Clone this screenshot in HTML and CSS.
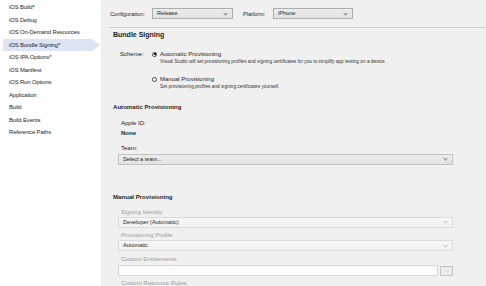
FILE: index.html
```html
<!DOCTYPE html>
<html lang="en">

<head>
  <meta charset="UTF-8">
  <meta name="viewport" content="width=device-width, initial-scale=1.0">
  <title>iOS Bundle Signing</title>
  <link rel="stylesheet" href="styles.css">
</head>

<body>
  <div class="window">
    <ul class="nav">
      <li class="nav-item">iOS Build*</li>
      <li class="nav-item">iOS Debug</li>
      <li class="nav-item">iOS On-Demand Resources</li>
      <li class="nav-item active">iOS Bundle Signing*</li>
      <li class="nav-item">iOS IPA Options*</li>
      <li class="nav-item">iOS Manifest</li>
      <li class="nav-item">iOS Run Options</li>
      <li class="nav-item">Application</li>
      <li class="nav-item">Build</li>
      <li class="nav-item">Build Events</li>
      <li class="nav-item">Reference Paths</li>
    </ul>

    <div class="main">
      <div class="toolbar">
        <span class="toolbar-label">Configuration:</span>
        <div class="select select-config">Release</div>
        <span class="toolbar-label platform-label">Platform:</span>
        <div class="select select-platform">iPhone</div>
      </div>

      <div class="content">
        <h2 class="page-title">Bundle Signing</h2>

        <div class="scheme">
          <span class="scheme-label">Scheme:</span>
          <div class="options">
            <div class="option">
              <span class="radio checked"></span>
              <div>
                <div class="option-title">Automatic Provisioning</div>
                <div class="option-desc">Visual Studio will set provisioning profiles and signing certificates for you to simplify app testing on a device.</div>
              </div>
            </div>
            <div class="option">
              <span class="radio"></span>
              <div>
                <div class="option-title">Manual Provisioning</div>
                <div class="option-desc">Set provisioning profiles and signing certificates yourself.</div>
              </div>
            </div>
          </div>
        </div>

        <h3 class="section-title auto-title">Automatic Provisioning</h3>
        <div class="fields auto-fields">
          <div class="field-label first">Apple ID:</div>
          <div class="field-value">None</div>
          <div class="field-label team-label">Team:</div>
          <div class="select select-wide">Select a team...</div>
        </div>

        <h3 class="section-title manual-title">Manual Provisioning</h3>
        <div class="fields manual-fields">
          <div class="field-label disabled first">Signing Identity:</div>
          <div class="select select-wide select-disabled">Developer (Automatic)</div>
          <div class="field-label disabled">Provisioning Profile:</div>
          <div class="select select-wide select-disabled">Automatic</div>
          <div class="field-label disabled">Custom Entitlements:</div>
          <div class="input-row">
            <div class="text-input"></div>
            <div class="browse-btn">...</div>
          </div>
          <div class="field-label disabled">Custom Resource Rules:</div>
        </div>
      </div>
    </div>
  </div>
</body>

</html>
```

FILE: styles.css
```css
* {
  box-sizing: border-box;
}

body {
  margin: 0;
  font-family: 'Liberation Sans', Arial, sans-serif;
  font-size: 6px;
  color: #1e1e1e;
  overflow: hidden;
}

.window {
  display: flex;
  width: 486px;
  height: 286px;
  overflow: hidden;
}

/* left navigation */
.nav {
  list-style: none;
  margin: 0;
  padding: 1.25px 0 0;
  width: 101px;
  flex-shrink: 0;
  background-color: #fff;
}

.nav-item {
  position: relative;
  height: 12.5px;
  line-height: 12.5px;
  padding-left: 9px;
  font-size: 5.9px;
  letter-spacing: -0.12px;
  white-space: nowrap;
}

.nav-item.active {
  margin-left: 3px;
  width: 89px;
  padding-left: 6px;
  background-color: #dfe4f5;
}

.nav-item.active::after {
  content: '';
  position: absolute;
  left: 89px;
  top: 0;
  border-left: 8px solid #dfe4f5;
  border-top: 6.25px solid transparent;
  border-bottom: 6.25px solid transparent;
}

/* main panel */
.main {
  flex: 1;
  background-color: #f0f0f0;
}

.toolbar {
  display: flex;
  align-items: center;
  height: 28px;
  margin-left: 8px;
  padding-left: 1px;
  border-bottom: 1px solid #cfcfcf;
}

.toolbar-label {
  width: 42px;
  font-size: 5.6px;
}

.platform-label {
  width: 30px;
  margin-left: 10px;
}

.select {
  position: relative;
  height: 11px;
  line-height: 9px;
  padding-left: 4px;
  border: 1px solid #c3c3c3;
  background: linear-gradient(#ececec, #e2e2e2);
  font-size: 5.6px;
}

.select::after {
  content: '';
  position: absolute;
  right: 5px;
  top: 2.5px;
  width: 2px;
  height: 2px;
  border-right: 1px solid #8a8a8a;
  border-bottom: 1px solid #8a8a8a;
  transform: rotate(45deg);
}

.select-config {
  width: 81px;
  border-color: #adadad;
}

.select-platform {
  width: 80px;
  border-color: #adadad;
}

.content {
  padding-left: 12px;
}

.page-title {
  margin: 0;
  height: 14px;
  line-height: 14px;
  font-size: 7px;
  font-weight: bold;
}

/* scheme radios */
.scheme {
  display: flex;
  margin-top: 8px;
  padding-left: 7px;
}

.scheme-label {
  width: 32px;
  line-height: 8px;
}

.option {
  display: flex;
  margin-bottom: 9px;
}

.radio {
  position: relative;
  width: 5px;
  height: 5px;
  margin-top: 1.5px;
  margin-right: 3px;
  border: 1px solid #444;
  border-radius: 50%;
  background-color: #fff;
}

.radio.checked::after {
  content: '';
  position: absolute;
  left: 0.5px;
  top: 0.5px;
  width: 2px;
  height: 2px;
  background-color: #222;
}

.option-title {
  line-height: 8px;
}

.option-desc {
  line-height: 8px;
  font-size: 4.75px;
  color: #333;
  white-space: nowrap;
}

/* sections */
.section-title {
  margin: 0;
  height: 12px;
  line-height: 12px;
  font-size: 6.1px;
  font-weight: bold;
}

.auto-title {
  margin-top: 1px;
}

.manual-title {
  margin-top: 26.5px;
}

.fields {
  margin-left: 5px;
  width: 335px;
}

.field-label {
  padding-left: 3px;
  line-height: 8px;
}

.auto-fields .field-label.first {
  margin-top: 5.5px;
}

.team-label {
  margin-top: 7px;
}

.auto-fields .select {
  margin-top: 2px;
}

.manual-fields .field-label {
  margin-top: 3.5px;
}

.manual-fields .field-label.first {
  margin-top: 4.5px;
}

.manual-fields .select {
  margin-top: 1px;
}

.field-label.disabled {
  color: #9a9a9a;
}

.field-value {
  margin-top: 2px;
  padding-left: 3px;
  line-height: 8px;
  font-weight: bold;
}

.select-wide {
  width: 335px;
}

.select-disabled {
  border-color: #dcdcdc;
  background: linear-gradient(#f6f6f6, #f1f1f1);
}

.select-disabled::after {
  border-color: #c4c4c4;
}

.input-row {
  display: flex;
  margin-top: 2px;
  gap: 2px;
}

.text-input {
  width: 321px;
  height: 11px;
  border: 1px solid #d6d6d6;
  background-color: #fbfbfb;
}

.browse-btn {
  width: 13px;
  height: 10px;
  margin-top: 1px;
  border: 1px solid #c3c3c3;
  background-color: #ececec;
  color: #9a9a9a;
  font-size: 5px;
  line-height: 6px;
  text-align: center;
}
```
